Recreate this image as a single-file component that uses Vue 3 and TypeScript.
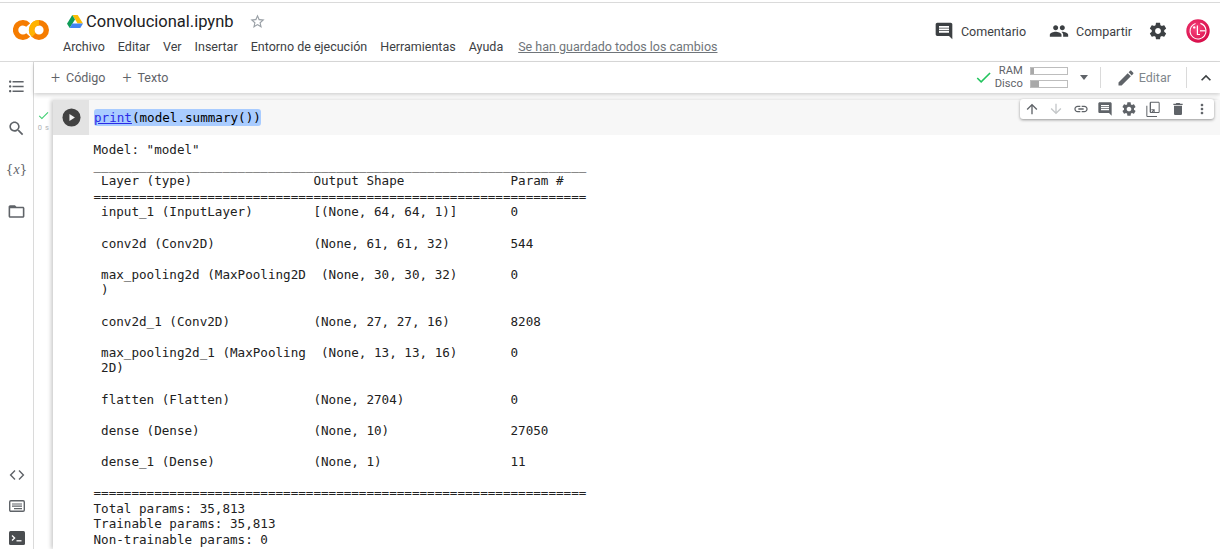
<script setup lang="ts">
const menus: string[] = ['Archivo', 'Editar', 'Ver', 'Insertar', 'Entorno de ejecución', 'Herramientas', 'Ayuda']
const gear = 'M19.43 12.98c.04-.32.07-.64.07-.98s-.03-.66-.07-.98l2.11-1.65c.19-.15.24-.42.12-.64l-2-3.46c-.12-.22-.39-.3-.61-.22l-2.49 1c-.52-.4-1.08-.73-1.69-.98l-.38-2.65C14.46 2.18 14.25 2 14 2h-4c-.25 0-.46.18-.49.42l-.38 2.65c-.61.25-1.17.59-1.69.98l-2.49-1c-.23-.09-.49 0-.61.22l-2 3.46c-.13.22-.07.49.12.64l2.11 1.65c-.04.32-.07.65-.07.98s.03.66.07.98l-2.11 1.65c-.19.15-.24.42-.12.64l2 3.46c.12.22.39.3.61.22l2.49-1c.52.4 1.08.73 1.69.98l.38 2.65c.03.24.24.42.49.42h4c.25 0 .46-.18.49-.42l.38-2.65c.61-.25 1.17-.59 1.69-.98l2.49 1c.23.09.49 0 .61-.22l2-3.46c.12-.22.07-.49-.12-.64l-2.11-1.65zM12 15.5c-1.93 0-3.5-1.57-3.5-3.5s1.57-3.5 3.5-3.5 3.5 1.57 3.5 3.5-1.57 3.5-3.5 3.5z'
const comment = 'M21.99 4c0-1.1-.89-2-1.99-2H4c-1.1 0-2 .9-2 2v12c0 1.1.9 2 2 2h14l4 4-.01-18zM18 14H6v-2h12v2zm0-3H6V9h12v2zm0-3H6V6h12v2z'
const cellIcons: { d: string; cls?: string }[] = [
  { d: 'M4 12l1.41 1.41L11 7.83V20h2V7.83l5.58 5.59L20 12l-8-8-8 8z' },
  { d: 'M20 12l-1.41-1.41L13 16.17V4h-2v12.17l-5.58-5.59L4 12l8 8 8-8z', cls: 'off' },
  { d: 'M3.9 12c0-1.71 1.39-3.1 3.1-3.1h4V7H7c-2.76 0-5 2.24-5 5s2.24 5 5 5h4v-1.9H7c-1.71 0-3.1-1.39-3.1-3.1zM8 13h8v-2H8v2zm9-6h-4v1.9h4c1.71 0 3.1 1.39 3.1 3.1s-1.39 3.1-3.1 3.1h-4V17h4c2.76 0 5-2.24 5-5s-2.24-5-5-5z' },
  { d: comment },
  { d: gear },
  { d: 'M9 1h11c1.1 0 2 .9 2 2v13c0 1.1-.9 2-2 2H9c-1.1 0-2-.9-2-2V3c0-1.1.9-2 2-2zm0 1.500v14h11.500v-14H9zM2 7h1.500v15.500H18V24H4c-1.100 0-2-.9-2-2V7zm7.500 5.500h5v5h-1.500v-2.400L10.600 18 9.500 16.900l2.500-2.900H9.500z' },
  { d: 'M6 19c0 1.1.9 2 2 2h8c1.1 0 2-.9 2-2V7H6v12zM19 4h-3.5l-1-1h-5l-1 1H5v2h14V4z' },
  { d: 'M12 8c1.1 0 2-.9 2-2s-.9-2-2-2-2 .9-2 2 .9 2 2 2zm0 2c-1.1 0-2 .9-2 2s.9 2 2 2 2-.9 2-2-.9-2-2-2zm0 6c-1.1 0-2 .9-2 2s.9 2 2 2 2-.9 2-2-.9-2-2-2z' }
]
const output = `Model: "model"
_________________________________________________________________
 Layer (type)                Output Shape              Param #   
=================================================================
 input_1 (InputLayer)        [(None, 64, 64, 1)]       0         
                                                                 
 conv2d (Conv2D)             (None, 61, 61, 32)        544       
                                                                 
 max_pooling2d (MaxPooling2D  (None, 30, 30, 32)       0         
 )                                                               
                                                                 
 conv2d_1 (Conv2D)           (None, 27, 27, 16)        8208      
                                                                 
 max_pooling2d_1 (MaxPooling  (None, 13, 13, 16)       0         
 2D)                                                             
                                                                 
 flatten (Flatten)           (None, 2704)              0         
                                                                 
 dense (Dense)               (None, 10)                27050     
                                                                 
 dense_1 (Dense)             (None, 1)                 11        
                                                                 
=================================================================
Total params: 35,813
Trainable params: 35,813
Non-trainable params: 0`
</script>

<template>
  <div class="app">
    <header class="header">
      <svg class="logo" viewBox="0 0 36 20" width="36" height="20">
        <path d="M15.200 5A7.300 7.300 0 1 0 15.200 15" fill="none" stroke="#f57c00" stroke-width="5.400" />
        <circle cx="26" cy="10" r="7.300" fill="none" stroke="#f57c00" stroke-width="5.400" />
        <path d="M26 2.700A7.300 7.300 0 0 0 20.800 15.200" fill="none" stroke="#ffb300" stroke-width="5.400" />
      </svg>
      <div class="doc">
        <div class="title-row">
          <svg class="drive" viewBox="0 0 16 13" width="16" height="13">
            <path d="M5.3 0h5.4l5.3 8.6h-5.400z" fill="#fbbc04" />
            <path d="M5.3 0L0 8.700l2.700 4.300L8 4.400z" fill="#0f9d58" />
            <path d="M5.200 8.600H16L13.300 13H2.700z" fill="#4285f4" />
          </svg>
          <span class="title">Convolucional.ipynb</span>
          <svg class="star" viewBox="0 0 24 24" width="17" height="17"><path d="M22 9.240l-7.190-.620L12 2 9.190 8.630 2 9.240l5.460 4.730L5.820 21 12 17.270 18.180 21l-1.630-7.030L22 9.240zM12 15.400l-3.760 2.270 1-4.280-3.320-2.880 4.380-.380L12 6.100l1.710 4.040 4.380.380-3.320 2.880 1 4.280L12 15.400z" /></svg>
        </div>
        <nav class="menu">
          <span v-for="m in menus" :key="m">{{ m }}</span>
          <span class="saved">Se han guardado todos los cambios</span>
        </nav>
      </div>
      <div class="actions">
        <div class="action comment">
          <svg viewBox="0 0 24 24" width="20" height="20"><path :d="comment" /></svg>
          <span>Comentario</span>
        </div>
        <div class="action share">
          <svg viewBox="0 0 24 24" width="20" height="20"><path d="M16 11c1.660 0 2.990-1.340 2.990-3S17.660 5 16 5c-1.660 0-3 1.340-3 3s1.340 3 3 3zm-8 0c1.660 0 2.990-1.340 2.990-3S9.660 5 8 5C6.340 5 5 6.340 5 8s1.340 3 3 3zm0 2c-2.330 0-7 1.170-7 3.500V19h14v-2.500c0-2.330-4.670-3.500-7-3.500zm8 0c-.290 0-.620.020-.970.050 1.160.840 1.970 1.970 1.970 3.450V19h6v-2.500c0-2.330-4.670-3.500-7-3.500z" /></svg>
          <span>Compartir</span>
        </div>
        <svg class="gear" viewBox="0 0 24 24" width="20" height="20"><path :d="gear" /></svg>
        <svg class="avatar" viewBox="0 0 24 24" width="24" height="24">
          <defs>
            <radialGradient id="lg" cx="42%" cy="40%" r="65%">
              <stop offset="0" stop-color="#f9477f" />
              <stop offset="1" stop-color="#d40845" />
            </radialGradient>
          </defs>
          <circle cx="12" cy="12" r="11.700" fill="url(#lg)" />
          <circle cx="12" cy="12" r="8" fill="none" stroke="#fff" stroke-width="1.100" stroke-dasharray="36 5" transform="rotate(-8 12 12)" />
          <circle cx="8.200" cy="8.400" r="1.200" fill="#fff" />
          <path d="M11.400 6.500V15.500H14" fill="none" stroke="#fff" stroke-width="1.200" />
          <path d="M14 11.800H19.500" fill="none" stroke="#fff" stroke-width="1.200" />
        </svg>
      </div>
    </header>

    <div class="body">
      <aside class="side">
        <div class="side-top">
          <div class="side-item"><svg viewBox="0 0 24 24" width="19" height="19"><path d="M4 10.500c-.830 0-1.500.670-1.500 1.500s.670 1.500 1.500 1.500 1.500-.670 1.500-1.500-.670-1.500-1.500-1.500zm0-6c-.830 0-1.500.670-1.500 1.500S3.170 7.500 4 7.500 5.500 6.830 5.500 6 4.830 4.500 4 4.500zm0 12c-.830 0-1.500.680-1.500 1.500s.680 1.500 1.500 1.500 1.500-.680 1.500-1.500-.670-1.500-1.500-1.500zM7 19h14v-2H7v2zm0-6h14v-2H7v2zm0-8v2h14V5H7z" /></svg></div>
          <div class="side-item"><svg viewBox="0 0 24 24" width="19" height="19"><path d="M15.500 14h-.790l-.280-.270C15.410 12.590 16 11.110 16 9.500 16 5.910 13.090 3 9.500 3S3 5.910 3 9.500 5.910 16 9.500 16c1.610 0 3.090-.590 4.230-1.570l.270.280v.790l5 4.990L20.490 19l-4.990-5zm-6 0C7.010 14 5 11.990 5 9.500S7.010 5 9.500 5 14 7.010 14 9.500 11.990 14 9.500 14z" /></svg></div>
          <div class="side-item vars"><span>{<i>x</i>}</span></div>
          <div class="side-item"><svg viewBox="0 0 24 24" width="19" height="19"><path d="M20 6h-8l-2-2H4c-1.100 0-1.990.9-1.990 2L2 18c0 1.100.9 2 2 2h16c1.100 0 2-.9 2-2V8c0-1.100-.9-2-2-2zm0 12H4V8h16v10z" /></svg></div>
        </div>
        <div class="side-bottom">
          <div class="side-item small"><svg viewBox="0 0 16 16" width="16" height="16"><path d="M6 3.600L1.600 8 6 12.400M10 3.600L14.400 8 10 12.400" fill="none" stroke="#5f6368" stroke-width="1.400" /></svg></div>
          <div class="side-item small"><svg viewBox="0 0 16 16" width="16" height="16"><rect x="0.700" y="2.700" width="14.600" height="10.600" rx="1.200" fill="none" stroke="#5f6368" stroke-width="1.400" /><path d="M3 6h10M3 8.200h10M5 10.600h8" stroke="#5f6368" stroke-width="1.200" /></svg></div>
          <div class="side-item small"><svg viewBox="0 0 16 16" width="16" height="16"><rect x="0" y="1" width="16" height="14" rx="1.500" fill="#4a4d50" /><path d="M3 5.600L5.600 8 3 10.400" fill="none" stroke="#fff" stroke-width="1.300" /><path d="M7.500 10.800h5" stroke="#fff" stroke-width="1.300" /></svg></div>
        </div>
      </aside>

      <main class="main">
        <div class="toolbar">
          <div class="add">
            <span class="plus">+</span><span>Código</span>
          </div>
          <div class="add">
            <span class="plus">+</span><span>Texto</span>
          </div>
          <div class="status">
            <svg viewBox="0 0 24 24" width="19" height="19"><path d="M9 16.200L4.800 12l-1.400 1.400L9 19 21 7l-1.400-1.400z" fill="#23c45e" /></svg>
            <div class="labels"><span>RAM</span><span>Disco</span></div>
            <div class="meters">
              <div class="meter"><div class="fill" style="width: 8%"></div></div>
              <div class="meter"><div class="fill" style="width: 22%"></div></div>
            </div>
            <span class="caret"></span>
          </div>
          <span class="divider d1"></span>
          <div class="edit">
            <svg viewBox="0 0 24 24" width="20" height="20"><path d="M3 17.250V21h3.750L17.810 9.940l-3.750-3.750L3 17.250zM20.710 7.040c.390-.390.390-1.020 0-1.410l-2.340-2.340c-.390-.390-1.020-.390-1.410 0l-1.830 1.830 3.750 3.750 1.830-1.830z" /></svg>
            <span>Editar</span>
          </div>
          <span class="divider d2"></span>
          <svg class="collapse" viewBox="0 0 24 24" width="20" height="20"><path d="M12 8l-6 6 1.410 1.410L12 10.830l4.590 4.580L18 14z" /></svg>
        </div>

        <div class="content">
          <div class="gutter">
            <svg viewBox="0 0 24 24" width="13" height="13"><path d="M9 16.200L4.800 12l-1.400 1.400L9 19 21 7l-1.400-1.400z" fill="#3fcf72" /></svg>
            <span class="secs">0 s</span>
          </div>
          <section class="cell">
            <div class="cell-input">
              <div class="run">
                <svg viewBox="0 0 20 20" width="19" height="19"><circle cx="10" cy="10" r="9.500" fill="#424242" /><path d="M7.800 6.200L13.600 10 7.800 13.800z" fill="#f2f2f2" /></svg>
              </div>
              <div class="code"><span class="sel"><u class="kw">print</u>(model.summary())</span></div>
            </div>
            <pre class="out">{{ output }}</pre>
          </section>
          <div class="cell-tools">
            <svg v-for="(ic, i) in cellIcons" :key="i" :class="ic.cls" viewBox="0 0 24 24" width="16" height="16"><path :d="ic.d" /></svg>
          </div>
        </div>
      </main>
    </div>
  </div>
</template>

<style>
html, body { margin: 0; padding: 0; background: #fff; overflow: hidden; }
</style>

<style scoped>
.app {
  width: 1220px;
  height: 549px;
  overflow: hidden;
  display: flex;
  flex-direction: column;
  font-family: Roboto, "Liberation Sans", sans-serif;
  color: #3c4043;
  background: #fff;
}
svg { display: block; flex: none; fill: #5f6368; }

.header {
  flex: none;
  margin-top: 2px;
  border-top: 1px solid #dadada;
  border-bottom: 1px solid #dadada;
  height: 58px;
  display: flex;
  align-items: flex-start;
}
.logo { margin: 17px 0 0 13px; }
.doc { margin-left: 14px; }
.title-row { display: flex; align-items: center; height: 24px; margin: 6px 0 0 4px; }
.title { font-size: 16.5px; color: #202124; margin-left: 3px; }
.star { margin-left: 15px; fill: #9aa0a6; }
.menu {
  display: flex;
  gap: 13px;
  margin-top: 4px;
  font-size: 12.5px;
  line-height: 20px;
  color: #3c4043;
  white-space: nowrap;
}
.saved { color: #70757a; text-decoration: underline; margin-left: 2px; }
.actions {
  margin-left: auto;
  display: flex;
  align-items: center;
  height: 56px;
  padding-right: 10px;
  font-size: 12.5px;
  color: #3c4043;
}
.action { display: flex; align-items: center; gap: 7px; }
.action svg { fill: #3c4043; }
.share { margin-left: 23px; }
.gear { margin-left: 16px; fill: #3c4043; }
.avatar { margin-left: 18px; }

.body { flex: 1; display: flex; min-height: 0; }
.side {
  width: 33px;
  flex: none;
  border-right: 1px solid #dadada;
  display: flex;
  flex-direction: column;
}
.side-top { padding-top: 4px; }
.side-bottom { margin-top: 226.500px; }
.side-item { height: 41.600px; display: flex; align-items: center; justify-content: center; }
.side-item svg { fill: #5f6368; }
.side-item.small { height: 31.500px; }
.vars { font-family: "DejaVu Serif", "Liberation Serif", serif; font-size: 12.500px; color: #5f6368; }
.vars i { font-family: "Liberation Serif", serif; font-size: 14px; }

.main { flex: 1; min-width: 0; display: flex; flex-direction: column; }
.toolbar {
  height: 31px;
  flex: none;
  display: flex;
  align-items: center;
  font-size: 12.5px;
  color: #5f6368;
  box-shadow: 0 2px 4px rgba(0, 0, 0, 0.18);
  position: relative;
  z-index: 2;
  background: #fff;
  padding-left: 16px;
}
.add { display: flex; align-items: center; gap: 5px; margin-right: 16px; }
.plus { font-size: 16px; font-weight: 300; line-height: 16px; width: 11px; text-align: center; }
.status { margin-left: auto; margin-top: -1px; display: flex; align-items: center; }
.labels {
  display: flex;
  flex-direction: column;
  align-items: flex-end;
  font-size: 11.200px;
  line-height: 13px;
  margin-left: 2px;
  color: #5f6368;
}
.meters { display: flex; flex-direction: column; gap: 5px; margin-left: 7px; }
.meter { width: 36px; height: 6px; border: 1px solid #bdbdbd; background: #fff; }
.fill { height: 100%; background: #a9a9a9; }
.caret {
  margin-left: 12px;
  width: 0;
  height: 0;
  border-left: 4.500px solid transparent;
  border-right: 4.500px solid transparent;
  border-top: 5px solid #5f6368;
}
.divider { width: 1px; height: 21px; background: #dadada; }
.d1 { margin-left: 12px; }
.edit { display: flex; align-items: center; gap: 3px; margin-left: 15px; color: #80868b; }
.edit svg { fill: #5f6368; }
.d2 { margin-left: 15px; }
.collapse { margin-left: 9px; margin-right: 4px; fill: #3c4043; }

.content { position: relative; flex: 1; min-height: 0; display: flex; padding-top: 7px; overflow: hidden; }
.gutter {
  width: 19px;
  flex: none;
  display: flex;
  flex-direction: column;
  align-items: center;
  padding-top: 9px;
  box-sizing: border-box;
}
.secs { font-size: 7.500px; letter-spacing: 0.600px; line-height: 10px; color: #b0b3b6; margin-top: 1px; white-space: nowrap; }
.cell { flex: 1; min-width: 0; box-shadow: -2px 0 4px rgba(0, 0, 0, 0.2); }
.cell-input { height: 35px; display: flex; background: #f7f7f7; }
.run { width: 36px; background: #e3e3e3; display: flex; align-items: center; justify-content: center; }
.code {
  padding: 9px 0 0 5px;
  font-family: "DejaVu Sans Mono", monospace;
  font-size: 12.600px;
  line-height: 17px;
  color: #000;
  white-space: pre;
}
.sel { background: #a9ccff; border-radius: 3px; display: inline-block; height: 17px; }
.kw { color: #2a2ae6; }
.out {
  margin: 0;
  padding: 7.100px 0 0 40.500px;
  font-family: "DejaVu Sans Mono", monospace;
  font-size: 12.600px;
  line-height: 15.600px;
  color: #212121;
  white-space: pre;
}
.cell-tools {
  position: absolute;
  top: 6px;
  right: 6px;
  width: 194px;
  height: 20px;
  box-sizing: border-box;
  padding: 0 4px;
  display: flex;
  align-items: center;
  justify-content: space-between;
  background: #fff;
  border-radius: 3px;
  box-shadow: 0 1px 3px rgba(0, 0, 0, 0.4);
}
.cell-tools svg { fill: #5f6368; }
.cell-tools svg.off { fill: #c4c7c9; }
</style>
